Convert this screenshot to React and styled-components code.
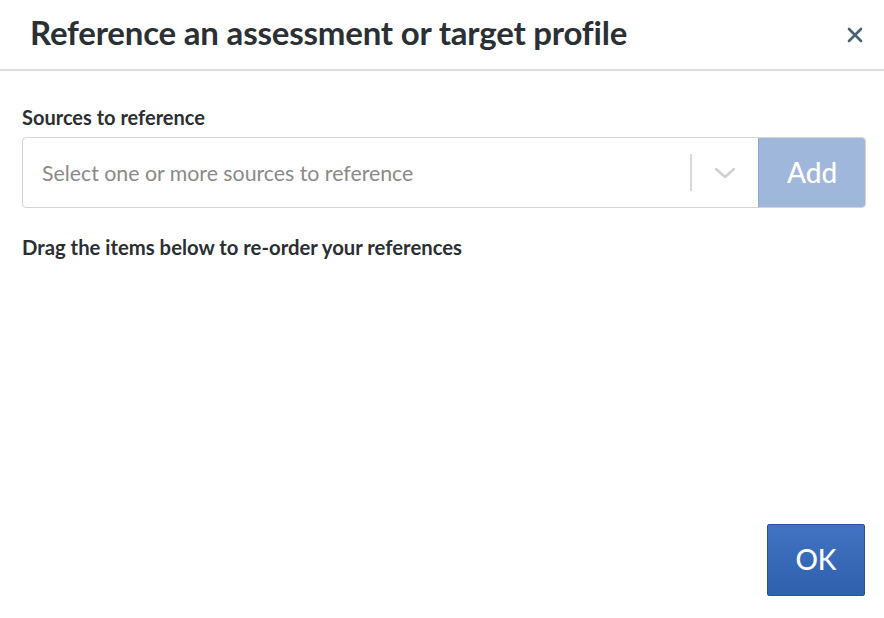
import React from 'react'
import styled, { createGlobalStyle } from 'styled-components'

const Global = createGlobalStyle`
  html, body {
    margin: 0;
    padding: 0;
    background: #fff;
  }
  body {
    font-family: Lato, "Open Sans", sans-serif;
    color: #2b2f33;
  }
`

const Modal = styled.div`
  width: 884px;
  height: 618px;
  display: flex;
  flex-direction: column;
  background: #fff;
`

const Header = styled.div`
  display: flex;
  align-items: center;
  justify-content: space-between;
  padding: 0 17px 0 30px;
  border-bottom: 2px solid #dcdde3;
  box-sizing: border-box;
  height: 71px;
`

const Title = styled.h1`
  margin: 0;
  font-size: 33px;
  font-weight: 700;
  color: #2b3035;
  letter-spacing: -0.2px;
  padding-bottom: 6px;
`

const Close = styled.button`
  border: none;
  background: none;
  padding: 0;
  width: 24px;
  height: 24px;
  display: flex;
  align-items: center;
  justify-content: center;
  cursor: pointer;
`

const Body = styled.div`
  flex: 1;
  padding: 34px 18px 0 22px;
  display: flex;
  flex-direction: column;
`

const Label = styled.div`
  font-size: 20px;
  font-weight: 700;
  color: #2b2f33;
  line-height: 24px;
  margin-bottom: 8px;
`

const Field = styled.div`
  display: flex;
  height: 71px;
  border: 1px solid #d4d4d4;
  border-radius: 4px;
  box-sizing: border-box;
  overflow: hidden;
`

const Select = styled.div`
  flex: 1;
  display: flex;
  align-items: center;
  padding-left: 19px;
`

const Placeholder = styled.span`
  flex: 1;
  font-size: 21.3px;
  color: #8a8a8a;
`

const Divider = styled.span`
  width: 2px;
  height: 37px;
  background: #d8d8d8;
`

const Chevron = styled.span`
  width: 66px;
  display: flex;
  align-items: center;
  justify-content: center;
`

const AddButton = styled.button`
  width: 107px;
  border: none;
  border-left: 1px solid #8ea7cf;
  background: #a0b7dc;
  color: #fff;
  font-family: inherit;
  font-size: 28px;
  font-weight: 500;
  padding-bottom: 3px;
`

const Hint = styled(Label)`
  margin-top: 27px;
  font-size: 20.3px;
`

const Footer = styled.div`
  display: flex;
  justify-content: flex-end;
  padding: 0 19px 22px 0;
`

const OkButton = styled.button`
  width: 98px;
  height: 72px;
  border: 1px solid #2a5595;
  border-radius: 2px;
  background: linear-gradient(#4173c2, #2e60ae);
  color: #fff;
  font-family: inherit;
  font-size: 28px;
  font-weight: 500;
  padding-bottom: 3px;
`

export default function App() {
  return (
    <>
      <Global />
      <Modal>
        <Header>
          <Title>Reference an assessment or target profile</Title>
          <Close aria-label="Close">
            <svg width="16" height="16" viewBox="0 0 16 16">
              <path d="M2 2 L14 14 M14 2 L2 14" stroke="#4b6276" strokeWidth="2.6" strokeLinecap="round" />
            </svg>
          </Close>
        </Header>
        <Body>
          <Label>Sources to reference</Label>
          <Field>
            <Select>
              <Placeholder>Select one or more sources to reference</Placeholder>
              <Divider />
              <Chevron>
                <svg width="22" height="12" viewBox="0 0 22 12">
                  <path d="M2 2 L11 10 L20 2" fill="none" stroke="#cfcfcf" strokeWidth="2.4" strokeLinecap="round" strokeLinejoin="round" />
                </svg>
              </Chevron>
            </Select>
            <AddButton>Add</AddButton>
          </Field>
          <Hint>Drag the items below to re-order your references</Hint>
        </Body>
        <Footer>
          <OkButton>OK</OkButton>
        </Footer>
      </Modal>
    </>
  )
}
